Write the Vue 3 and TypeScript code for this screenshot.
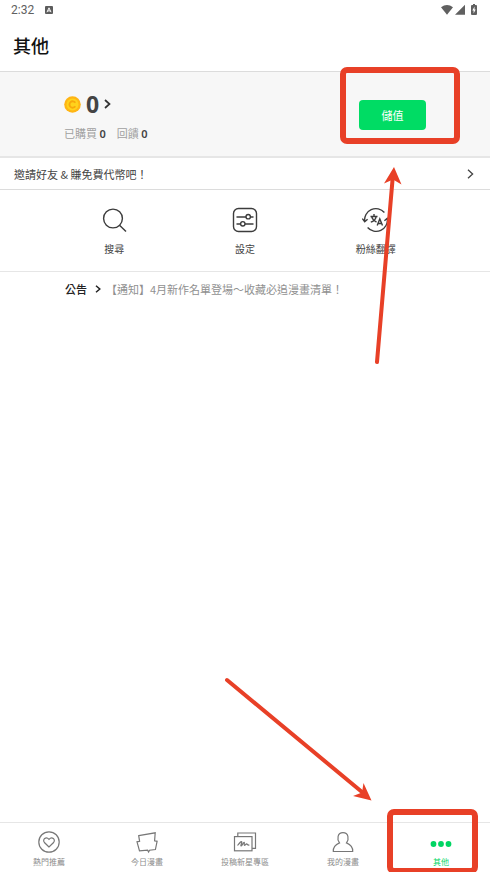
<script setup lang="ts">
import { ref } from 'vue'

interface MenuItem {
  id: string
  label: string
}

const coins = ref(0)
const purchased = ref(0)
const rewarded = ref(0)

const menu: MenuItem[] = [
  { id: 'search', label: '搜尋' },
  { id: 'settings', label: '設定' },
  { id: 'translate', label: '粉絲翻譯' },
]

const tabs: MenuItem[] = [
  { id: 'popular', label: '熱門推薦' },
  { id: 'today', label: '今日漫畫' },
  { id: 'canvas', label: '投稿新星專區' },
  { id: 'mine', label: '我的漫畫' },
  { id: 'more', label: '其他' },
]

const activeTab = ref('more')
</script>

<template>
  <div class="app">
    <div class="status">
      <span class="clock">2:32</span>
      <svg class="badge" width="8" height="8" viewBox="0 0 8 8" aria-hidden="true">
        <rect width="8" height="8" rx="1" fill="#5c5c5c" />
        <path d="M2 6.2 4 1.8 6 6.2M2.800 4.900h2.400" fill="none" stroke="#fff" />
      </svg>
      <svg class="signals" width="38" height="12" viewBox="0 0 38 12" aria-hidden="true">
        <g fill="#606060">
          <path d="M0 3.200Q6-1 12 3.200L6 10.800Z" />
          <path d="M14 10.800 24 .8v10Z" />
          <path d="M31 1h1V0h2v1h1q1 0 1 1v8q0 1-1 1h-4q-1 0-1-1V2q0-1 1-1Z" />
        </g>
        <path d="M33.500 2.500 31.300 6.400h1.300v3L34.700 5.500H33.500Z" fill="#fff" />
      </svg>
    </div>

    <header class="header">
      <h1>其他</h1>
    </header>

    <section class="balance">
      <div>
        <a class="coins" href="#coins">
          <svg width="17" height="17" viewBox="0 0 17 17" aria-hidden="true">
            <circle cx="8.500" cy="8.500" r="8.300" fill="#ffb515" />
            <circle cx="8.500" cy="8.500" r="6" fill="#ffd21c" />
            <path d="M11.300 6.700A3.200 3.200 0 1 0 11.300 10.300" fill="none" stroke="#f8a80c" stroke-width="1.900" />
          </svg>
          <strong>{{ coins }}</strong>
          <svg width="7" height="10" viewBox="0 0 7 10" aria-hidden="true">
            <path d="M1 1l4.500 4L1 9" fill="none" stroke="#333" stroke-width="1.700" />
          </svg>
        </a>
        <p class="details">
          <span>已購買 <b>{{ purchased }}</b></span>
          <span>回饋 <b>{{ rewarded }}</b></span>
        </p>
      </div>
      <button class="charge" type="button">儲值</button>
    </section>

    <a class="invite" href="#invite">
      <span>邀請好友 &amp; 賺免費代幣吧！</span>
      <svg width="7" height="10" viewBox="0 0 7 10" aria-hidden="true">
        <path d="M1 .8l4.600 4.200L1 9.200" fill="none" stroke="#444" stroke-width="1.300" />
      </svg>
    </a>

    <nav class="menu" aria-label="功能">
      <a v-for="item in menu" :key="item.id" :href="'#' + item.id">
        <svg v-if="item.id === 'search'" width="28" height="28" viewBox="0 0 28 28" class="dark" aria-hidden="true">
          <circle cx="13" cy="12.500" r="9.400" />
          <path d="M19.500 19.200 26 25.600" />
        </svg>
        <svg v-else-if="item.id === 'settings'" width="28" height="28" viewBox="0 0 28 28" class="dark" aria-hidden="true">
          <rect x="2.500" y="2.500" width="23" height="23" rx="5" />
          <path d="M5.500 11h9.500M19.500 11h3M5.500 18h4M14 18h8.500" />
          <circle cx="17.200" cy="10.700" r="2.200" />
          <circle cx="11.800" cy="17.800" r="2.200" />
        </svg>
        <svg v-else width="28" height="28" viewBox="0 0 28 28" class="dark" aria-hidden="true">
          <path d="M22.400 6.500A11.300 11.300 0 0 0 2.700 15.500M.3 12.600l2.400 3.100 2.900-2.500" />
          <path d="M5.600 21.500A11.300 11.300 0 0 0 25.300 12.500M22.400 14.800l2.900-2.500 2.400 3.100" />
          <path d="M8.500 10.500h7M12 8v2.500M14.200 10.600c-.7 3-2.800 4.800-5.400 5.600M9.600 10.600c.9 2.800 2.800 4.500 4.900 5.400" />
          <path d="M15.200 19.600 17.800 13l2.700 6.600M16.200 17.500h3.300" />
        </svg>
        <span>{{ item.label }}</span>
      </a>
    </nav>

    <a class="notice" href="#notice">
      <b>公告</b>
      <svg width="6" height="8" viewBox="0 0 6 8" aria-hidden="true">
        <path d="M1 .7 4.800 4 1 7.300" fill="none" stroke="#222" stroke-width="1.500" />
      </svg>
      <span>【通知】4月新作名單登場～收藏必追漫畫清單！</span>
    </a>

    <main class="content"></main>

    <nav class="tabs" aria-label="主選單">
      <button
        v-for="tab in tabs"
        :key="tab.id"
        type="button"
        :class="{ active: tab.id === activeTab }"
        @click="activeTab = tab.id"
      >
        <svg width="24" height="24" viewBox="0 0 24 24" aria-hidden="true">
          <template v-if="tab.id === 'popular'">
            <circle cx="12" cy="12" r="10.200" />
            <path d="M12 17 7.400 12.500C5 9.500 9 6 12 9.300c3-3.300 7 .2 4.600 3.200Z" />
          </template>
          <template v-else-if="tab.id === 'today'">
            <path d="M3.700 5.700 20.200 2.800 19.600 10.800 22.100 11.300 20.400 19.500 14.500 20.200 13.600 22 12.600 20.200 4.500 20.800 2 11.800 4.600 11.300Z" />
          </template>
          <template v-else-if="tab.id === 'canvas'">
            <rect x="1.500" y="6.600" width="17.500" height="14.200" />
            <path d="M4.800 6.500V3h17.700v15.300h-3.400" />
            <path d="M4.500 15.500C6.500 13 8.500 10.500 8.800 12c.2 1-1.600 3.500-.8 4 1 .3 2.200-4 3.200-3.700.8.300-.7 2.700.2 3 .9.200 1.400-1.700 2.300-1.500.8.200.5 1.600 2.700 1.200" />
          </template>
          <template v-else-if="tab.id === 'mine'">
            <path d="M2.300 21.500C2 16.800 4.800 14.500 8.500 12.900 5.700 9 6.400 2.600 12 2.600s6.300 6.400 3.500 10.300c3.700 1.600 6.500 3.900 6.200 8.600Z" />
          </template>
          <g v-else fill="#00d563" stroke="none">
            <circle cx="4.500" cy="14" r="2.900" />
            <circle cx="12" cy="14" r="2.900" />
            <circle cx="19.500" cy="14" r="2.900" />
          </g>
        </svg>
        <span>{{ tab.label }}</span>
      </button>
    </nav>

    <!-- Guide marks laid over the page -->
    <svg class="guide" viewBox="0 0 490 872" aria-hidden="true">
      <g fill="none" stroke="#e84027" stroke-width="6">
        <rect x="343" y="70" width="114" height="71" rx="4" />
        <rect x="390" y="812" width="85" height="59" rx="4" />
      </g>
      <g fill="none" stroke="#e84027" stroke-width="4" stroke-linecap="round">
        <path d="M377 362 392.500 180" />
        <path d="M227 680 362 792" />
      </g>
      <g fill="#e84027">
        <path d="M394 167 401.500 184.500 393 179.500 384 183.500Z" />
        <path d="M371.500 800.500 353 796 362 792.500 363.500 783Z" />
      </g>
    </svg>
  </div>
</template>

<style>
body {
  margin: 0;
  background: #fff;
}
</style>

<style scoped>
.app {
  position: relative;
  display: flex;
  flex-direction: column;
  min-height: 100vh;
  overflow: hidden;
  font-family: 'Noto Sans CJK TC', 'Noto Sans', sans-serif;
  font-size: 11px;
  line-height: 16px;
  color: #444;
}

.app * {
  box-sizing: border-box;
}

svg {
  flex: none;
}

a {
  color: inherit;
  text-decoration: none;
}

button {
  padding: 0;
  border: 0;
  background: none;
  font: inherit;
  color: inherit;
  cursor: pointer;
}

.status {
  display: flex;
  align-items: center;
  height: 20px;
  padding: 0 11px;
  font-family: Roboto, sans-serif;
  font-size: 12px;
  color: #606060;
}

.badge {
  margin-left: 11px;
}

.signals {
  margin-left: auto;
}

.header {
  display: flex;
  align-items: center;
  height: 52px;
  padding: 0 13px 2px;
  border-bottom: 1px solid #dcdcdc;
}

h1 {
  margin: 0;
  font-size: 18px;
  font-weight: 500;
  line-height: 24px;
  color: #111;
}

.balance {
  display: flex;
  align-items: center;
  justify-content: space-between;
  height: 86px;
  padding: 2px 64px 0;
  border-bottom: 2px solid #e6e6e6;
  background: #f7f7f7;
}

.coins {
  display: flex;
  align-items: center;
  gap: 5px;
}

.coins strong {
  font-family: 'Noto Sans', sans-serif;
  font-size: 23px;
  line-height: 32px;
}

.details {
  display: flex;
  gap: 11px;
  margin: 5px 0 0;
  color: #a0a0a0;
}

.details b {
  font-family: 'Noto Sans', sans-serif;
  font-weight: 600;
  color: #444;
}

.charge {
  width: 67px;
  height: 30px;
  border-radius: 4px;
  background: #00dc64;
  color: #fff;
}

.invite {
  display: flex;
  align-items: center;
  justify-content: space-between;
  height: 32px;
  padding: 0 16px 0 14px;
  border-bottom: 1px solid #dcdcdc;
}

.menu {
  display: grid;
  grid-template-columns: repeat(3, 1fr);
  height: 82px;
  padding: 16px 49px 0;
  border-bottom: 1px solid #e6e6e6;
  font-size: 10px;
}

.menu a {
  display: flex;
  flex-direction: column;
  align-items: center;
  gap: 7px;
}

.dark {
  fill: none;
  stroke: #3c3c3c;
  stroke-width: 1.4;
}

.notice {
  display: flex;
  align-items: center;
  height: 34px;
  padding: 0 65px;
  white-space: nowrap;
  color: #909090;
}

.notice b {
  margin-right: 8px;
  font-weight: 500;
  color: #222;
}

.notice span {
  margin-left: 5px;
}

.content {
  flex: 1;
}

.tabs {
  display: grid;
  grid-template-columns: repeat(5, 1fr);
  height: 50px;
  border-top: 1px solid #e6e6e6;
  font-size: 8px;
  line-height: 12px;
  color: #8c8c8c;
}

.tabs button {
  display: flex;
  flex-direction: column;
  align-items: center;
  gap: 2px;
  padding-top: 7px;
}

.tabs svg {
  fill: none;
  stroke: #777;
  stroke-width: 1.2;
}

.tabs .active {
  color: #00d563;
}

.guide {
  position: absolute;
  inset: 0;
  width: 100%;
  height: 100%;
  pointer-events: none;
}
</style>
